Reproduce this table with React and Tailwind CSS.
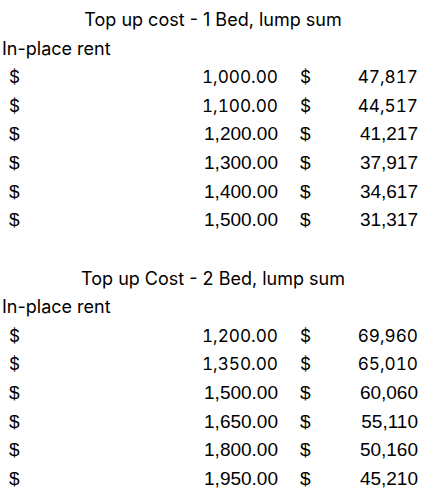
import React from 'react';

const tables = [
  {
    title: 'Top up cost - 1 Bed, lump sum',
    rows: [
      ['1,000.00', '47,817'],
      ['1,100.00', '44,517'],
      ['1,200.00', '41,217'],
      ['1,300.00', '37,917'],
      ['1,400.00', '34,617'],
      ['1,500.00', '31,317'],
    ],
  },
  {
    title: 'Top up Cost - 2 Bed, lump sum',
    rows: [
      ['1,200.00', '69,960'],
      ['1,350.00', '65,010'],
      ['1,500.00', '60,060'],
      ['1,650.00', '55,110'],
      ['1,800.00', '50,160'],
      ['1,950.00', '45,210'],
    ],
  },
];

// first two value rows of each block render in the Aptos-ish face, rest in Arial metrics
const aptos = "font-['Inter','Noto_Sans',sans-serif] text-[18px]";
const aptosNum = "font-['Inter','Noto_Sans',sans-serif] text-[17.2px] tabular-nums";
const arial = "font-['Liberation_Sans',Arial,sans-serif] text-[19px]";

const Row = ({ rent, cost, soft }) => (
  <div className={`flex h-[28.75px] items-center text-black ${soft ? aptosNum : arial}`}>
    <div className="flex w-[278px] justify-between pl-[9px]">
      <span>$</span>
      <span>{rent}</span>
    </div>
    <div className="flex w-[140px] justify-between pl-[22px]">
      <span>$</span>
      <span>{cost}</span>
    </div>
  </div>
);

const Block = ({ title, rows }) => (
  <div>
    <div className={`flex h-[28.75px] items-center justify-center w-[426px] text-black ${aptos}`}>
      {title}
    </div>
    <div className={`flex h-[28.75px] items-center pl-[2px] text-black ${aptos}`}>In-place rent</div>
    {rows.map(([rent, cost], i) => (
      <Row key={i} rent={rent} cost={cost} soft={i < 2} />
    ))}
  </div>
);

const App = () => {
  return (
    <div className="w-[430px] h-[498px] bg-white pt-[5px] overflow-hidden">
      <Block {...tables[0]} />
      <div className="h-[28.75px]" />
      <Block {...tables[1]} />
    </div>
  );
};

export default App;
